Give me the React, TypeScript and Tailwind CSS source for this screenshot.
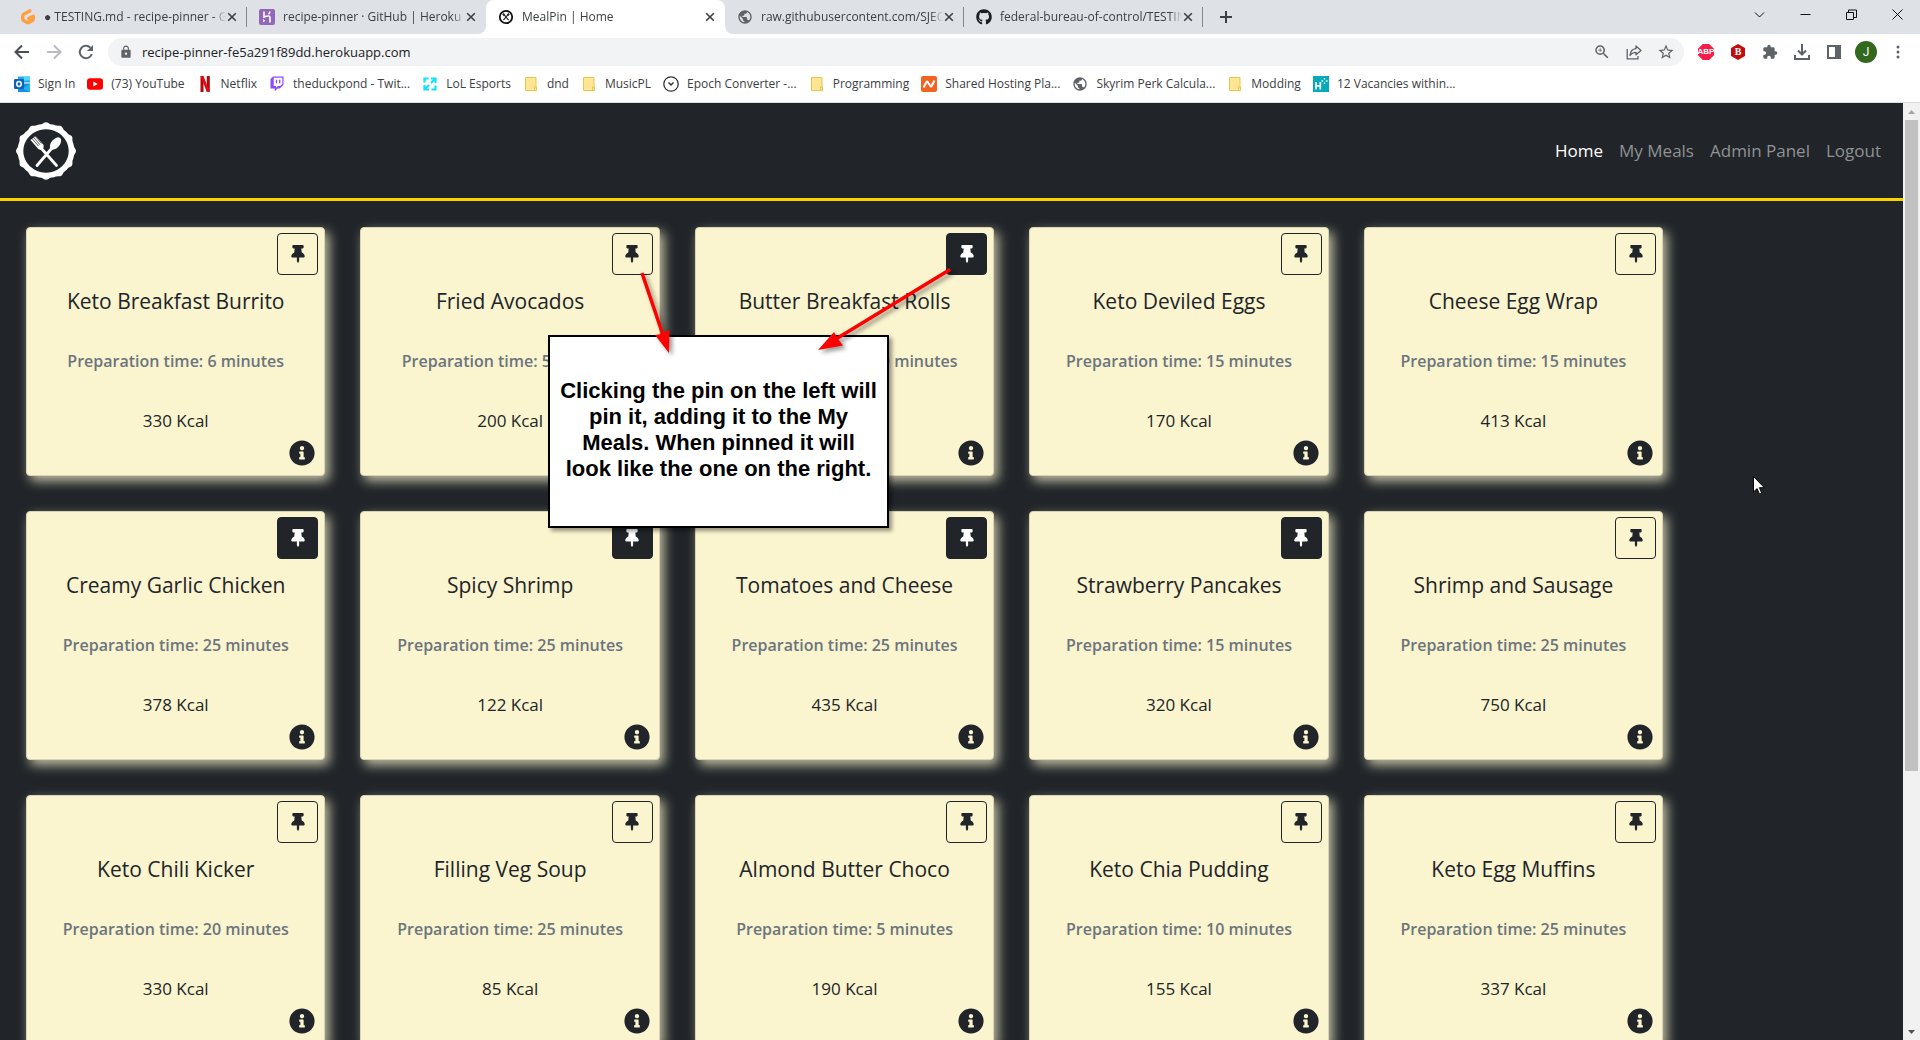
import type { ReactNode } from "react";
import { FaGithub, FaInfoCircle, FaThumbtack } from "react-icons/fa";
import { MdExtension, MdLock, MdPublic, MdStarBorder, MdZoomIn } from "react-icons/md";

type Meal = { name: string; minutes: number; kcal: number; pinned?: boolean };

const meals: Meal[] = [
  { name: "Keto Breakfast Burrito", minutes: 6, kcal: 330 },
  { name: "Fried Avocados", minutes: 5, kcal: 200 },
  { name: "Butter Breakfast Rolls", minutes: 10, kcal: 210, pinned: true },
  { name: "Keto Deviled Eggs", minutes: 15, kcal: 170 },
  { name: "Cheese Egg Wrap", minutes: 15, kcal: 413 },
  { name: "Creamy Garlic Chicken", minutes: 25, kcal: 378, pinned: true },
  { name: "Spicy Shrimp", minutes: 25, kcal: 122, pinned: true },
  { name: "Tomatoes and Cheese", minutes: 25, kcal: 435, pinned: true },
  { name: "Strawberry Pancakes", minutes: 15, kcal: 320, pinned: true },
  { name: "Shrimp and Sausage", minutes: 25, kcal: 750 },
  { name: "Keto Chili Kicker", minutes: 20, kcal: 330 },
  { name: "Filling Veg Soup", minutes: 25, kcal: 85 },
  { name: "Almond Butter Choco", minutes: 5, kcal: 190 },
  { name: "Keto Chia Pudding", minutes: 10, kcal: 155 },
  { name: "Keto Egg Muffins", minutes: 25, kcal: 337 },
];

/* ---------- favicons ---------- */

function GitpodIcon() {
  return (
    <svg viewBox="0 0 16 16" className="size-4 shrink-0">
      <path
        d="M9.800 1.900 3.900 5.100q-1.200.7-1.200 1.800v3q0 1 1 1.600l3 1.700q1.300.7 2.600 0l3-1.700q1-.6 1-1.600V7.200L8.800 9.600"
        fill="none"
        stroke="#ffa040"
        strokeWidth="3.400"
        strokeLinejoin="round"
        strokeLinecap="round"
      />
    </svg>
  );
}

function HerokuIcon() {
  return (
    <svg viewBox="0 0 16 16" className="size-4 shrink-0">
      <rect width="16" height="16" rx="2" fill="#9266b8" />
      <path d="M5 2.500v5.600q3-1.300 4.800-1.100q1.200.2 1.200 1.600V13.500" fill="none" stroke="#fff" strokeWidth="1.600" />
      <path d="M4.200 10l2.200 1.800-2.200 1.800z" fill="#fff" />
      <path d="M10.900 2.500q-.2 1.500-1.300 2.800" fill="none" stroke="#fff" strokeWidth="1.600" />
    </svg>
  );
}

function MealPinIcon() {
  return (
    <svg viewBox="0 0 16 16" className="size-4 shrink-0">
      <circle cx="8" cy="8" r="6.200" fill="none" stroke="#111" strokeWidth="1.800" />
      <path d="M5.400 4.800 10.600 11.200M10.600 4.800 5.400 11.200" stroke="#222" strokeWidth="1.100" />
      <path d="M4.900 4.700 6.500 6.600M11 4.700 9.600 6.500" stroke="#222" strokeWidth="1.900" />
    </svg>
  );
}

function OutlookIcon() {
  return (
    <svg viewBox="0 0 16 16" className="size-4">
      <path d="M4 .5h12v6H4z" fill="#28a8ea" />
      <path d="M10 .5h6v4h-6z" fill="#50d9ff" />
      <path d="M4 7.500h12V16H4z" fill="#1490df" />
      <path d="M16 7.500 9 12.500 16 16z" fill="#1fb3f0" />
      <rect y="3" width="10" height="10" rx="1" fill="#0a64b8" />
      <ellipse cx="5" cy="8" rx="2.200" ry="2.400" fill="none" stroke="#fff" strokeWidth="1.500" />
    </svg>
  );
}

function YouTubeIcon() {
  return (
    <svg viewBox="0 0 16 16" className="size-4">
      <rect y="2.300" width="16" height="11.400" rx="3" fill="#f00" />
      <path d="M6.300 5.500 10.800 8 6.300 10.500z" fill="#fff" />
    </svg>
  );
}

function NetflixIcon() {
  return (
    <svg viewBox="0 0 16 16" className="size-4">
      <path d="M3.500 0h3v16h-3zM9.800 0h3v16h-3z" fill="#b1060f" />
      <path d="M3.500 0h3l6.300 16h-3z" fill="#e50914" />
    </svg>
  );
}

function TwitchIcon() {
  return (
    <svg viewBox="0 0 16 16" className="size-4">
      <path d="M4 .5h10.500v8.200L10.800 12.500H8.500L5.700 15.300V12.500H1.500V3z" fill="#9146ff" />
      <path d="M4.700 1.700h8.600v6.300l-2 2H9l-2 1.800V10H4.700z" fill="#fff" />
      <path d="M7.500 3.700v3.600M10.700 3.700v3.600" stroke="#9146ff" strokeWidth="1.300" />
    </svg>
  );
}

function LolIcon() {
  return (
    <svg viewBox="0 0 16 16" className="size-4" fill="none" stroke="#0fe3f7" strokeWidth="2.200">
      <path d="M6.500 2.500h-4v4M9.500 13.500h4v-4" />
      <path d="M9 7l4-4M7 9l-4 4" />
      <path d="M9 2.500h4.500V7M7 13.500H2.500V9" />
    </svg>
  );
}

function FolderIcon() {
  return (
    <svg viewBox="0 0 16 16" className="size-4">
      <path d="M2.500 1.500h10.500v9.500l.5 3.500h-11z" fill="#ffe694" stroke="#e9c54e" />
      <path d="M11.500 14.500v-3.500h2v3.500z" fill="#ffe694" stroke="#e9c54e" />
    </svg>
  );
}

function EpochIcon() {
  return (
    <svg viewBox="0 0 16 16" className="size-4" fill="none" stroke="#333">
      <circle cx="8" cy="8" r="7.200" strokeWidth="1.300" />
      <path d="M5.500 6.500 8 9l2.500-2.500" strokeWidth="1.500" />
    </svg>
  );
}

function NamecheapIcon() {
  return (
    <svg viewBox="0 0 16 16" className="size-4">
      <rect width="16" height="16" rx="2" fill="#f26322" />
      <path
        d="M3 10.800 5.600 5.700q.4-.6.9 0L9.600 10.300q.5.600.9 0L13 5.200"
        fill="none"
        stroke="#fff"
        strokeWidth="2"
        strokeLinecap="round"
        strokeLinejoin="round"
      />
    </svg>
  );
}

function VacancyIcon() {
  return (
    <svg viewBox="0 0 16 16" className="size-4">
      <rect width="16" height="16" fill="#03a9bd" />
      <path d="M3 6v7.500M7.300 6v7.500M3 9.800h4.300" stroke="#fff" strokeWidth="1.700" />
      <path d="M11.500 2v1.600M11.500 6.400V8M8.500 5h1.600M12.900 5h1.600" stroke="#fff" strokeWidth="1.400" />
    </svg>
  );
}

const globe = <MdPublic className="size-4 shrink-0 text-[#5f6368]" />;

/* ---------- browser chrome ---------- */

type TabInfo = { title: string; icon: ReactNode; active?: boolean; separator?: boolean };

const tabs: TabInfo[] = [
  { title: "● TESTING.md - recipe-pinner - Gitpod", icon: <GitpodIcon />, separator: true },
  { title: "recipe-pinner · GitHub | Heroku", icon: <HerokuIcon /> },
  { title: "MealPin | Home", icon: <MealPinIcon />, active: true },
  { title: "raw.githubusercontent.com/SJECollins", icon: globe, separator: true },
  {
    title: "federal-bureau-of-control/TESTING.md",
    icon: <FaGithub className="size-4 shrink-0 text-[#1b1f23]" />,
    separator: true,
  },
];

function Tab({ title, icon, active, separator }: TabInfo) {
  return (
    <div className={`relative flex w-[239px] items-center pr-[9px] pl-3 ${active ? "rounded-t-lg bg-white" : ""}`}>
      {active && (
        <>
          <svg viewBox="0 0 8 8" className="absolute bottom-0 -left-2 size-2">
            <path d="M8 0v8H0a8 8 0 0 0 8-8z" fill="#fff" />
          </svg>
          <svg viewBox="0 0 8 8" className="absolute -right-2 bottom-0 size-2">
            <path d="M0 0v8h8a8 8 0 0 1-8-8z" fill="#fff" />
          </svg>
        </>
      )}
      {icon}
      <span className="ml-2 min-w-0 flex-1 overflow-hidden whitespace-nowrap text-[12px] leading-4 text-[#3c4043] [mask-image:linear-gradient(to_right,#000_93%,transparent)]">
        {title}
      </span>
      <button aria-label="Close tab">
        <svg viewBox="0 0 12 12" className="size-3" stroke="#3c4043" strokeWidth="1.600">
          <path d="M2.200 2.200l7.600 7.600M9.800 2.200l-7.600 7.600" />
        </svg>
      </button>
      {separator && <div className="absolute right-0 h-5 w-px bg-[#85888d]" />}
    </div>
  );
}

function TabStrip() {
  return (
    <div className="flex h-[34px] bg-[#dee1e6] pl-2">
      {tabs.map((tab) => (
        <Tab key={tab.title} {...tab} />
      ))}
      <button aria-label="New tab" className="ml-4 self-center">
        <svg viewBox="0 0 14 14" className="size-[14px]" stroke="#3c4043" strokeWidth="2">
          <path d="M7 1v12M1 7h12" />
        </svg>
      </button>
      <div className="ml-auto flex h-7">
        {[
          { label: "Search tabs", d: "M1 3.500 5.500 8 10 3.500" },
          { label: "Minimize", d: "M.5 5.500h10" },
          { label: "Restore", d: "M.5 3.500h7v7h-7zM2.500 3.500v-2.500h8v7.500h-3" },
          { label: "Close", d: "M.5.5l10 10M10.500.5l-10 10" },
        ].map((b) => (
          <button key={b.label} aria-label={b.label} className="flex w-[46px] items-center justify-center">
            <svg viewBox="0 0 11 11" className="size-[11px]" fill="none" stroke="#111">
              <path d={b.d} />
            </svg>
          </button>
        ))}
      </div>
    </div>
  );
}

function ToolButton({ label, children }: { label: string; children: ReactNode }) {
  return (
    <button aria-label={label} className="flex h-7 w-8 shrink-0 items-center justify-center text-[#5f6368]">
      {children}
    </button>
  );
}

function Toolbar() {
  return (
    <div className="flex items-center bg-white px-[6px] py-1">
      <ToolButton label="Back">
        <svg viewBox="0 0 16 16" className="size-4" fill="none" stroke="#4a4d51" strokeWidth="2">
          <path d="M15 8H2M8 1.500 1.500 8 8 14.500" />
        </svg>
      </ToolButton>
      <ToolButton label="Forward">
        <svg viewBox="0 0 16 16" className="size-4" fill="none" stroke="#b9bbbe" strokeWidth="2">
          <path d="M1 8h13M8 1.500 14.500 8 8 14.500" />
        </svg>
      </ToolButton>
      <ToolButton label="Reload">
        <svg viewBox="0 0 16 16" className="size-4">
          <path d="M13.800 10.200a6.200 6.200 0 1 1-1.400-6.500" fill="none" stroke="#5f6368" strokeWidth="2" />
          <path d="M15 1v6H9z" fill="#5f6368" />
        </svg>
      </ToolButton>
      <div className="mx-[6px] flex h-7 flex-1 items-center rounded-full bg-[#f1f3f4] pr-[2px] pl-[11px]">
        <MdLock className="size-[14px] text-[#5f6368]" />
        <input
          aria-label="Address"
          defaultValue="recipe-pinner-fe5a291f89dd.herokuapp.com"
          className="ml-[9px] min-w-0 flex-1 bg-transparent text-[13px] leading-5 text-[#202124] outline-none"
        />
        <ToolButton label="Zoom">
          <MdZoomIn className="size-[18px]" />
        </ToolButton>
        <ToolButton label="Share">
          <svg viewBox="0 0 16 16" className="size-4" fill="none" stroke="#5f6368" strokeWidth="1.300">
            <path d="M1.200 5v9.800h10.800V12" />
            <path d="M10 2l5 4.500-5 4.300V8.300q-4 0-6 3.200 .6-6.300 6-6.800z" strokeLinejoin="round" />
          </svg>
        </ToolButton>
        <ToolButton label="Bookmark this page">
          <MdStarBorder className="size-[18px]" />
        </ToolButton>
      </div>
      <ToolButton label="Adblock Plus">
        <span className="flex size-4 items-center justify-center bg-[#f51d48] font-['Liberation_Sans',sans-serif] text-[8px] leading-none font-bold text-white [clip-path:polygon(30%_0,70%_0,100%_30%,100%_70%,70%_100%,30%_100%,0_70%,0_30%)]">
          ABP
        </span>
      </ToolButton>
      <ToolButton label="Blocker">
        <span className="flex h-4 w-[14px] items-center justify-center bg-[#c10d0d] font-['Liberation_Serif',serif] text-[10px] leading-none font-bold text-white [clip-path:polygon(50%_0,100%_25%,100%_75%,50%_100%,0_75%,0_25%)]">
          B
        </span>
      </ToolButton>
      <ToolButton label="Extensions">
        <MdExtension className="size-4" />
      </ToolButton>
      <ToolButton label="Downloads">
        <svg viewBox="0 0 16 16" className="size-4" fill="none" stroke="#5f6368" strokeWidth="2">
          <path d="M8 0v10M4 6.500l4 4 4-4M1 11v4h14v-4" />
        </svg>
      </ToolButton>
      <ToolButton label="Side panel">
        <svg viewBox="0 0 14 14" className="size-[14px]" fill="#5f6368">
          <path d="M0 0h14v14H0zM2 2v10h6V2z" fillRule="evenodd" />
        </svg>
      </ToolButton>
      <ToolButton label="Profile">
        <span className="flex size-[22px] items-center justify-center rounded-full bg-[#33691e] font-['Roboto',sans-serif] text-[12px] leading-none text-white">
          J
        </span>
      </ToolButton>
      <ToolButton label="Menu">
        <svg viewBox="0 0 4 14" className="h-[14px] w-1" fill="#5f6368">
          <circle cx="2" cy="2" r="1.500" />
          <circle cx="2" cy="7" r="1.500" />
          <circle cx="2" cy="12" r="1.500" />
        </svg>
      </ToolButton>
    </div>
  );
}

const bookmarks: { label: string; icon: ReactNode }[] = [
  { label: "Sign In", icon: <OutlookIcon /> },
  { label: "(73) YouTube", icon: <YouTubeIcon /> },
  { label: "Netflix", icon: <NetflixIcon /> },
  { label: "theduckpond - Twit...", icon: <TwitchIcon /> },
  { label: "LoL Esports", icon: <LolIcon /> },
  { label: "dnd", icon: <FolderIcon /> },
  { label: "MusicPL", icon: <FolderIcon /> },
  { label: "Epoch Converter -...", icon: <EpochIcon /> },
  { label: "Programming", icon: <FolderIcon /> },
  { label: "Shared Hosting Pla...", icon: <NamecheapIcon /> },
  { label: "Skyrim Perk Calcula...", icon: globe },
  { label: "Modding", icon: <FolderIcon /> },
  { label: "12 Vacancies within...", icon: <VacancyIcon /> },
];

function BookmarksBar() {
  return (
    <nav
      aria-label="Bookmarks"
      className="flex h-[33px] items-center gap-3 border-b border-[#dadce0] bg-white px-[14px] pb-1"
    >
      {bookmarks.map((b) => (
        <a
          key={b.label}
          href="#"
          className="flex items-center gap-2 whitespace-nowrap text-[12px] leading-4 text-[#3c4043]"
        >
          {b.icon}
          {b.label}
        </a>
      ))}
    </nav>
  );
}

/* ---------- site ---------- */

function scallopedRing() {
  const points: string[] = [];
  for (let i = 0; i < 180; i++) {
    const a = (i * Math.PI) / 90;
    const r = 28.9 + 0.8 * Math.cos(12 * a) + 0.3 * Math.cos(24 * a);
    points.push(`${(30 + r * Math.cos(a)).toFixed(2)} ${(29 + r * 0.96 * Math.sin(a)).toFixed(2)}`);
  }
  return `M${points.join("L")}Z M30 7.300a22.700 21.700 0 1 0 .01 0z`;
}

function Logo() {
  return (
    <svg viewBox="0 0 60 58" className="h-[58px] w-[60px]" fill="#fff">
      <path d={scallopedRing()} fillRule="evenodd" />
      <path d="M25 26 40.500 43.500M36 26 21 43.500" stroke="#fff" strokeWidth="2.800" strokeLinecap="round" />
      <ellipse cx="39.500" cy="21.500" rx="4.300" ry="7.200" transform="rotate(40 39.500 21.500)" />
      <path d="M14.500 18 19.500 14l7.500 8.200q1.500 2.800-.2 4.500t-4.300.5z" />
      <path
        d="M15.800 16.300 22.500 24M17.300 15 24 22.800M18.800 13.800 25.500 21.500"
        stroke="#212529"
        strokeWidth=".7"
      />
    </svg>
  );
}

function SiteHeader() {
  return (
    <header className="flex h-[98px] items-center justify-between border-b-3 border-[#f9d300] bg-[#212529] pr-[22px] pl-4">
      <a href="#" aria-label="MealPin">
        <Logo />
      </a>
      <nav aria-label="Site" className="flex gap-4 text-[17px] leading-6 text-[#909294]">
        <a href="#" className="text-white">
          Home
        </a>
        <a href="#">My Meals</a>
        <a href="#">Admin Panel</a>
        <a href="#">Logout</a>
      </nav>
    </header>
  );
}

function MealCard({ name, minutes, kcal, pinned }: Meal) {
  return (
    <article className="flex flex-col items-center rounded border border-[#d8d3b6] bg-[#faf4cf] px-[6px] pt-[5px] pb-[9px] text-[#212529] shadow-[4px_5px_12px_rgba(250,244,207,0.75)]">
      <button
        aria-label={`Pin ${name}`}
        aria-pressed={!!pinned}
        className={`flex h-[42px] w-[41px] items-center justify-center self-end rounded border border-[#212529] ${pinned ? "bg-[#212529] text-white" : ""}`}
      >
        <FaThumbtack className="size-[18px]" />
      </button>
      <h5 className="mt-[14px] text-[21px] leading-6 font-medium">{name}</h5>
      <h6 className="mt-[35px] text-[16px] leading-[26px] font-semibold text-[#6c757d]">
        Preparation time: {minutes} minutes
      </h6>
      <p className="mt-[34px] text-[17px] leading-[26px]">{kcal} Kcal</p>
      <a href="#" aria-label={`Details of ${name}`} className="mt-[6px] mr-[3px] self-end">
        <FaInfoCircle className="size-[26px]" />
      </a>
    </article>
  );
}

function Annotation() {
  return (
    <>
      <div className="absolute top-[232px] left-[548px] flex h-[193px] w-[341px] items-center justify-center border-2 border-black bg-white pb-[3px] text-center font-['Liberation_Sans',Arial,sans-serif] text-[22px] leading-[26px] font-bold text-black shadow-[3px_3px_4px_rgba(0,0,0,0.4)]">
        <p>
          Clicking the pin on the left will
          <br />
          pin it, adding it to the My
          <br />
          Meals. When pinned it will
          <br />
          look like the one on the right.
        </p>
      </div>
      <svg
        viewBox="0 0 340 100"
        className="absolute top-[160px] left-[630px] h-[100px] w-[340px] drop-shadow-[3px_3px_2px_rgba(0,0,0,0.4)]"
        fill="#f00"
      >
        <path d="M12 10 34 75" stroke="#f00" strokeWidth="3.500" />
        <path d="M39 90 25 72 32 71 39.500 66.500z" />
        <path d="M320 6.500 206 76" stroke="#f00" strokeWidth="3.500" />
        <path d="M188 87 204 69 208 76 213 82.500z" />
      </svg>
    </>
  );
}

function Scrollbar() {
  return (
    <div className="flex w-[17px] shrink-0 flex-col items-center bg-[#f1f1f1]">
      <svg viewBox="0 0 17 17" className="h-[17px] w-[17px]">
        <path d="M5 11h7L8.500 7z" fill="#a3a3a3" />
      </svg>
      <div className="w-[13px] basis-[69.5%] bg-[#c1c1c1]" />
      <svg viewBox="0 0 17 17" className="mt-auto h-[17px] w-[17px]">
        <path d="M5 7h7l-3.500 4z" fill="#505050" />
      </svg>
    </div>
  );
}

function Cursor() {
  return (
    <svg viewBox="0 0 12 19" className="absolute top-[373px] left-[1753px] h-[19px] w-3">
      <path d="M.5.5v15.500l3.600-3.400 2.400 5.600 2.300-1-2.400-5.500h5z" fill="#fff" stroke="#000" />
    </svg>
  );
}

export default function App() {
  return (
    <div className="flex h-screen flex-col overflow-hidden bg-[#212529] font-['Open_Sans','Noto_Sans',sans-serif]">
      <TabStrip />
      <Toolbar />
      <BookmarksBar />
      <div className="flex min-h-0 flex-1">
        <div className="relative min-w-0 flex-1 overflow-hidden">
          <SiteHeader />
          <main className="grid w-7/8 grid-cols-5 gap-[35px] pt-[26px] pr-[2px] pl-[26px]">
            {meals.map((meal) => (
              <MealCard key={meal.name} {...meal} />
            ))}
          </main>
          <Annotation />
          <Cursor />
        </div>
        <Scrollbar />
      </div>
    </div>
  );
}
